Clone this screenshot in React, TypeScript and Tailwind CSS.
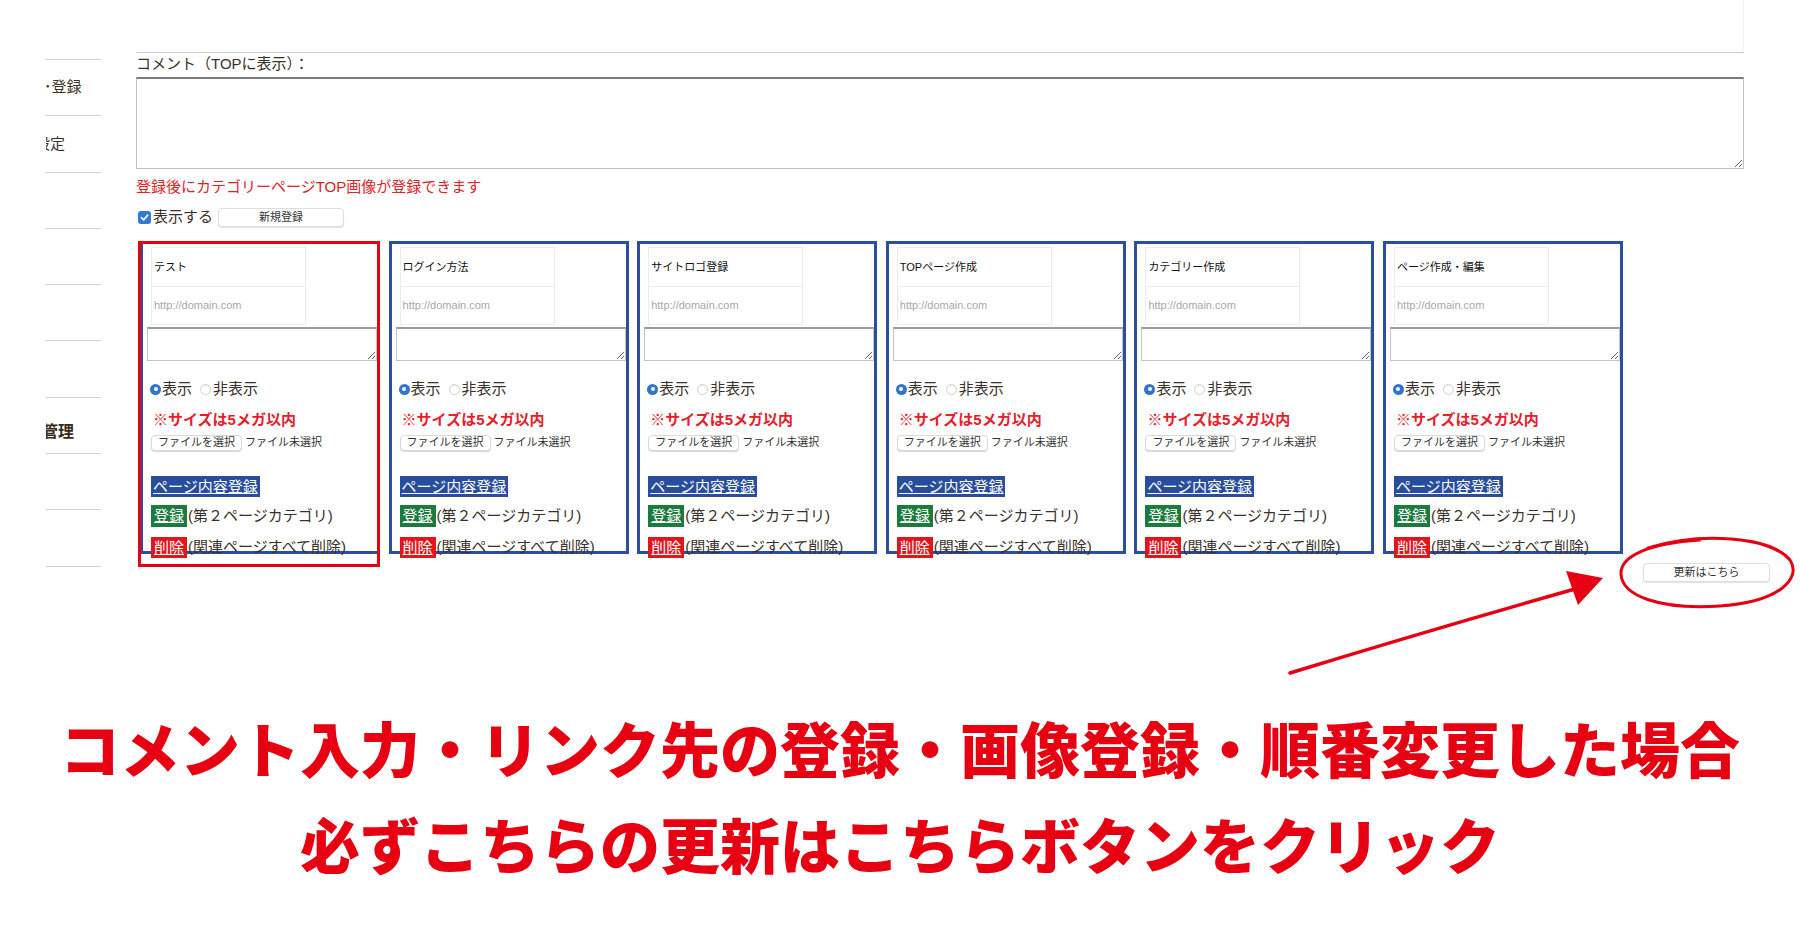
import React from "react";

const cards = [
  "テスト",
  "ログイン方法",
  "サイトロゴ登録",
  "TOPページ作成",
  "カテゴリー作成",
  "ページ作成・編集",
];

function Radio({ checked, className = "" }: { checked?: boolean; className?: string }) {
  if (checked) {
    return (
      <span className={`w-[11px] h-[11px] rounded-full bg-[#2f74d0] flex items-center justify-center shrink-0 ${className}`}>
        <span className="block w-[4px] h-[4px] rounded-full bg-white" />
      </span>
    );
  }
  return (
    <span
      className={`block w-[11px] h-[11px] rounded-full border border-[#d4d4d4] bg-white shadow-[inset_0_1px_1px_rgba(0,0,0,0.08)] shrink-0 ${className}`}
    />
  );
}

function Card({ title }: { title: string }) {
  return (
    <div className="w-[240px] h-[313px] shrink-0 border-[3px] border-[#2b4f9f] bg-white">
      <div className="mt-[3px] ml-[8px] w-[155px]">
        <div className="h-[40px] border border-[#ececec] flex items-center px-[2px] text-[11px] text-[#111]">
          {title}
        </div>
        <div className="h-[38px] border border-t-0 border-[#ececec] flex items-center px-[2px] text-[11px] text-[#a8a8a8]">
          http://domain.com
        </div>
      </div>
      <textarea className="block mt-[2px] ml-[4px] w-[230px] h-[34px] border border-[#c4c4c4] border-t-2 border-t-[#9c9c9c] bg-white" />
      <div className="mt-[18px] ml-[7px] h-[20px] flex items-center text-[15px] text-[#3a322a]">
        <Radio checked />
        <span className="ml-[1px]">表示</span>
        <Radio className="ml-[8px]" />
        <span className="ml-[2px]">非表示</span>
      </div>
      <div className="mt-[11px] ml-[10px] h-[20px] flex items-center text-[15px] font-bold text-[#e5202a]">
        ※サイズは5メガ以内
      </div>
      <div className="mt-[4px] ml-[8px] h-[17px] flex items-center text-[11px] text-[#333]">
        <span className="h-[16px] w-[91px] rounded-[4px] bg-white border border-[#dadada] shadow-[0_1px_1px_rgba(0,0,0,0.15)] flex items-center justify-center">
          ファイルを選択
        </span>
        <span className="ml-[3px]">ファイル未選択</span>
      </div>
      <div className="mt-[25px] ml-[8px] h-[21px] w-fit bg-[#284d9c] px-[2px] text-[15px] leading-[21px] text-white underline">
        ページ内容登録
      </div>
      <div className="mt-[8px] ml-[8px] h-[22px] flex items-center text-[15px]">
        <span className="bg-[#1b7a3d] px-[3px] leading-[22px] text-white underline">登録</span>
        <span className="ml-[1px] text-[#3a322a]">(第２ページカテゴリ)</span>
      </div>
      <div className="mt-[10px] ml-[8px] h-[21px] flex items-center text-[15px]">
        <span className="bg-[#e2151d] px-[3px] leading-[21px] text-white underline">削除</span>
        <span className="ml-[1px] text-[#3a322a]">(関連ページすべて削除)</span>
      </div>
    </div>
  );
}

export default function App() {
  return (
    <div className="relative w-[1800px] h-[950px] overflow-hidden bg-white font-['Liberation_Sans','Noto_Sans_CJK_JP',sans-serif] text-[#3a322a]">
      <div className="flex items-start">
        {/* sidebar */}
        <div className="ml-[46px] mt-[59px] w-[55px] shrink-0 border-t border-[#d2d2d2] text-[15px]">
          <div className="h-[56.3px] border-b border-[#d2d2d2] flex items-center overflow-hidden whitespace-nowrap">
            <span className="-ml-[2px]">･登録</span>
          </div>
          <div className="h-[56.3px] border-b border-[#d2d2d2] flex items-center overflow-hidden whitespace-nowrap">
            <span className="-ml-[11px]">設定</span>
          </div>
          <div className="h-[56.3px] border-b border-[#d2d2d2]" />
          <div className="h-[56.3px] border-b border-[#d2d2d2]" />
          <div className="h-[56.3px] border-b border-[#d2d2d2]" />
          <div className="h-[56.3px] border-b border-[#d2d2d2]" />
          <div className="h-[56.3px] border-b border-[#d2d2d2] flex items-center pt-[14px] overflow-hidden whitespace-nowrap">
            <span className="-ml-[4px] text-[16px] font-bold text-[#3b2a18]">管理</span>
          </div>
          <div className="h-[56.3px] border-b border-[#d2d2d2]" />
          <div className="h-[56.3px] border-b border-[#d2d2d2] flex items-center overflow-hidden whitespace-nowrap">
            <span className="-ml-[8px] text-[13px]">：</span>
          </div>
        </div>

        {/* main */}
        <div className="ml-[35px] w-[1608px] shrink-0">
          <div className="h-[53px] border-b border-[#c8c8c8] border-r border-r-[#f2f2f2]" />
          <div className="h-[22px] leading-[22px] text-[15px] text-[#3a322a]">コメント（TOPに表示）：</div>
          <textarea className="block mt-[2px] w-full h-[92px] border border-[#c2c2c2] border-t-2 border-t-[#7a7a7a] bg-white" />
          <div className="mt-[7px] h-[22px] leading-[22px] text-[15px] text-[#e0232b]">
            登録後にカテゴリーページTOP画像が登録できます
          </div>
          <div className="mt-[9px] h-[20px] flex items-center text-[15px]">
            <span className="ml-[2px] w-[13px] h-[13px] rounded-[3px] bg-[#3079d6] flex items-center justify-center">
              <svg width="9" height="9" viewBox="0 0 10 10">
                <path d="M1.5 5.2 L4 7.6 L8.6 2.4" fill="none" stroke="#fff" strokeWidth="1.8" strokeLinecap="round" strokeLinejoin="round" />
              </svg>
            </span>
            <span className="ml-[2px]">表示する</span>
            <span className="ml-[5px] h-[19px] w-[126px] rounded-[4px] bg-white border border-[#dedede] shadow-[0_1px_1px_rgba(0,0,0,0.12)] flex items-center justify-center text-[11px] text-[#333]">
              新規登録
            </span>
          </div>
          <div className="mt-[14px] ml-[4px] flex gap-[8.6px]">
            {cards.map((c, i) =>
              i === 0 ? (
                <div key={c} className="relative">
                  <Card title={c} />
                  <div className="absolute -left-[2px] top-0 w-[242px] h-[326px] border-[3px] border-[#e60012]" />
                </div>
              ) : (
                <Card key={c} title={c} />
              )
            )}
          </div>
          <div className="mt-[9px] -mr-[26px] flex justify-end">
            <span className="h-[19px] w-[127px] rounded-[4px] bg-white border border-[#dedede] shadow-[0_1px_1px_rgba(0,0,0,0.12)] flex items-center justify-center text-[11px] text-[#333]">
              更新はこちら
            </span>
          </div>
        </div>
      </div>

      <div className="mt-[117px] text-center whitespace-nowrap font-['Noto_Sans_CJK_JP',sans-serif] font-black text-[60px] leading-[96px] text-[#e60012]">
        <p>コメント入力・リンク先の登録・画像登録・順番変更した場合</p>
        <p>必ずこちらの更新はこちらボタンをクリック</p>
      </div>

      {/* annotations */}
      <svg className="absolute left-0 top-0 pointer-events-none" width="1800" height="950" viewBox="0 0 1800 950">
        <path d="M1290 673 Q1430 630 1582 587" fill="none" stroke="#e60012" strokeWidth="3.5" strokeLinecap="round" />
        <polygon points="1566,571 1603,578 1578,605" fill="#e60012" />
        <path
          d="M1648 548 C1700 532 1770 536 1790 560 C1802 578 1780 602 1720 606 C1660 610 1622 596 1621 574 C1620 556 1650 543 1700 540"
          fill="none"
          stroke="#e60012"
          strokeWidth="3"
          strokeLinecap="round"
        />
      </svg>
    </div>
  );
}
